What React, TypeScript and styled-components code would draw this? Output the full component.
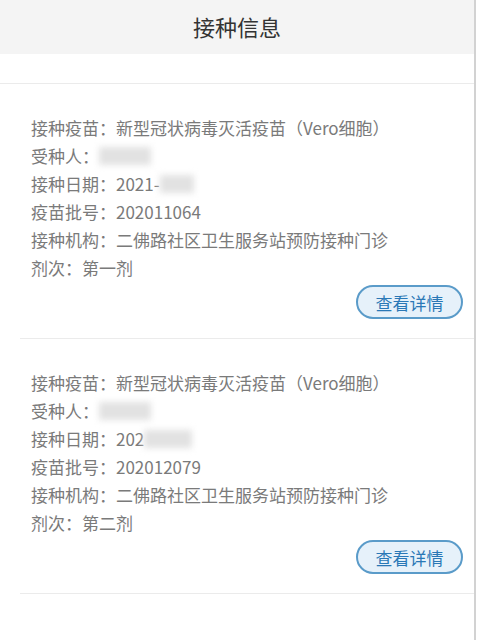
import styled, {createGlobalStyle} from "styled-components";
import {FC} from "react";

const GlobalStyles = createGlobalStyle`
  html, body {
    margin: 0;
    padding: 0;
    background: #fff;
    font-family: "Noto Sans CJK SC", "Noto Sans", sans-serif;
  }
`;

const Page = styled.div`
  width: 474px;
  height: 640px;
  border-right: 2px solid #d2d2d2;
  background: #fff;
  overflow: hidden;
`;

const Header = styled.div`
  height: 54px;
  padding-bottom: 3px;
  box-sizing: border-box;
  background: #f4f4f4;
  display: flex;
  align-items: center;
  justify-content: center;
  font-size: 22px;
  color: #333;
`;

const Spacer = styled.div`
  height: 29px;
  border-bottom: 1px solid #ebebeb;
`;

const Card = styled.div`
  margin-left: 20px;
  padding: 30px 0 19px 11px;
  border-bottom: 1px solid #ebebeb;
  display: flex;
  flex-direction: column;
`;

const Row = styled.div`
  height: 28px;
  line-height: 28px;
  font-size: 17px;
  color: #7a7a7a;
  display: flex;
  align-items: center;
  white-space: nowrap;
`;

// blurred placeholder for hidden personal data
const Masked = styled.span<{ $w: number }>`
  display: inline-block;
  width: ${p => p.$w}px;
  height: 18px;
  background: #e2e2e2;
  filter: blur(3px);
`;

const Actions = styled.div`
  display: flex;
  justify-content: flex-end;
  padding-right: 11px;
  margin-top: 3px;
`;

const DetailButton = styled.button`
  width: 107px;
  height: 34px;
  border-radius: 17px;
  border: 2px solid #5a9bc9;
  background: #e6f1fa;
  color: #2a78b6;
  font-family: inherit;
  font-size: 17px;
  padding: 0;
`;

type Record = {
    batch: string
    dose: string
    datePrefix: string
    dateMask: number
}

const records: Record[] = [
    {batch: "202011064", dose: "第一剂", datePrefix: "2021-", dateMask: 34},
    {batch: "202012079", dose: "第二剂", datePrefix: "202", dateMask: 48},
];

const RecordCard: FC<{ r: Record }> = ({r}) => (
    <Card>
        <Row>接种疫苗：新型冠状病毒灭活疫苗（Vero细胞）</Row>
        <Row>受种人：<Masked $w={52}/></Row>
        <Row>接种日期：{r.datePrefix}<Masked $w={r.dateMask}/></Row>
        <Row>疫苗批号：{r.batch}</Row>
        <Row>接种机构：二佛路社区卫生服务站预防接种门诊</Row>
        <Row>剂次：{r.dose}</Row>
        <Actions>
            <DetailButton>查看详情</DetailButton>
        </Actions>
    </Card>
);

const App: FC = () => (
    <>
        <GlobalStyles/>
        <Page>
            <Header>接种信息</Header>
            <Spacer/>
            {records.map(r => <RecordCard key={r.batch} r={r}/>)}
        </Page>
    </>
);

export default App;
